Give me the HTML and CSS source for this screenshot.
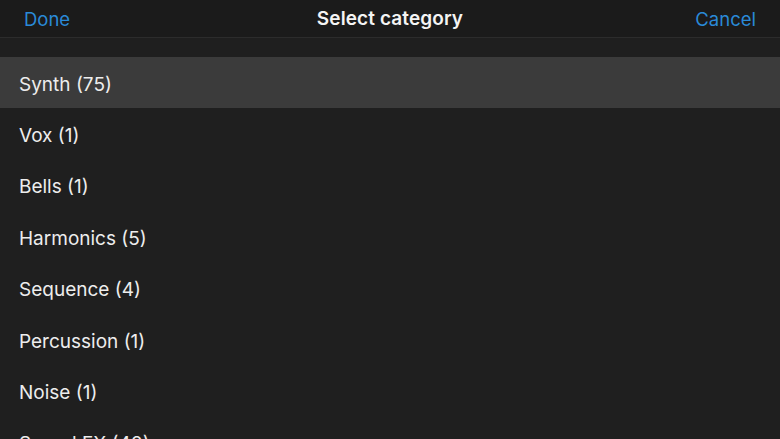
FILE: index.html
```html
<!DOCTYPE html>
<html>
<head>
<meta charset="utf-8">
<link rel="stylesheet" href="styles.css">
</head>
<body>
<div class="screen">
  <header class="nav">
    <span class="nav-btn left">Done</span>
    <span class="nav-title">Select category</span>
    <span class="nav-btn right">Cancel</span>
  </header>
  <div class="spacer"></div>
  <ul class="list">
    <li class="item selected">Synth (75)</li>
    <li class="item">Vox (1)</li>
    <li class="item">Bells (1)</li>
    <li class="item">Harmonics (5)</li>
    <li class="item">Sequence (4)</li>
    <li class="item">Percussion (1)</li>
    <li class="item">Noise (1)</li>
    <li class="item">Sound FX (40)</li>
  </ul>
</div>
</body>
</html>
```
FILE: styles.css
```css
html, body {
  margin: 0;
  padding: 0;
  background: #1f1f1f;
  overflow: hidden;
}
.screen {
  width: 780px;
  height: 439px;
  overflow: hidden;
  font-family: Inter, "Noto Sans", sans-serif;
  color: #f2f2f2;
}
.nav {
  height: 37px;
  display: grid;
  grid-template-columns: 1fr auto 1fr;
  align-items: center;
  padding: 0 24px;
  background: #1b1b1b;
  border-bottom: 1px solid #2c2c2c;
}
.nav-btn {
  color: #2a8ad8;
  font-size: 18.5px;
}
.nav-btn.right {
  justify-self: end;
}
.nav-title {
  font-size: 19px;
  font-weight: 600;
  color: #f4f4f4;
  letter-spacing: 0.1px;
}
.spacer {
  height: 19px;
}
.list {
  list-style: none;
  margin: 0;
  padding: 0;
}
.item {
  height: 51.4px;
  box-sizing: border-box;
  padding-top: 3px;
  display: flex;
  align-items: center;
  padding-left: 19px;
  font-size: 19px;
  color: #ededed;
}
.item.selected {
  background: #3b3b3b;
}
```
